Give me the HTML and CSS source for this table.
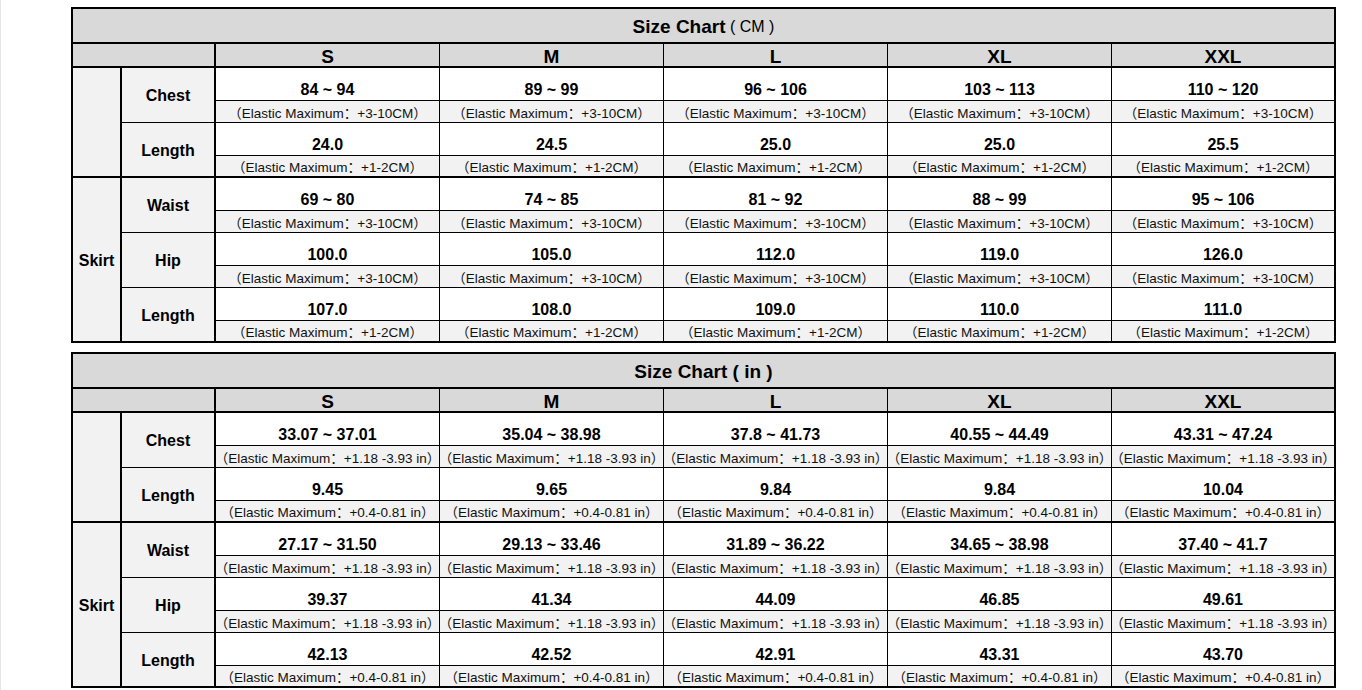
FILE: index.html
```html
<!DOCTYPE html>
<html lang="en">
<head>
<meta charset="utf-8">
<title>Size Chart</title>
<link rel="stylesheet" href="styles.css">
</head>
<body>
<main class="page">
  <section class="chart">
    <div class="title end">Size Chart<span class="unit"> ( CM )</span></div>
    <div class="head blank"></div>
    <div class="head">S</div><div class="head">M</div><div class="head">L</div><div class="head">XL</div><div class="head end">XXL</div>

    <div class="group g4"></div>
    <div class="name">Chest</div>
    <div class="val">84 ~ 94</div><div class="val">89 ~ 99</div><div class="val">96 ~ 106</div><div class="val">103 ~ 113</div><div class="val end">110 ~ 120</div>
    <div class="el">（Elastic Maximum：+3-10CM）</div><div class="el">（Elastic Maximum：+3-10CM）</div><div class="el">（Elastic Maximum：+3-10CM）</div><div class="el">（Elastic Maximum：+3-10CM）</div><div class="el end">（Elastic Maximum：+3-10CM）</div>
    <div class="name gl">Length</div>
    <div class="val">24.0</div><div class="val">24.5</div><div class="val">25.0</div><div class="val">25.0</div><div class="val end">25.5</div>
    <div class="el gl">（Elastic Maximum：+1-2CM）</div><div class="el gl">（Elastic Maximum：+1-2CM）</div><div class="el gl">（Elastic Maximum：+1-2CM）</div><div class="el gl">（Elastic Maximum：+1-2CM）</div><div class="el gl end">（Elastic Maximum：+1-2CM）</div>

    <div class="group g6 bottom">Skirt</div>
    <div class="name">Waist</div>
    <div class="val">69 ~ 80</div><div class="val">74 ~ 85</div><div class="val">81 ~ 92</div><div class="val">88 ~ 99</div><div class="val end">95 ~ 106</div>
    <div class="el">（Elastic Maximum：+3-10CM）</div><div class="el">（Elastic Maximum：+3-10CM）</div><div class="el">（Elastic Maximum：+3-10CM）</div><div class="el">（Elastic Maximum：+3-10CM）</div><div class="el end">（Elastic Maximum：+3-10CM）</div>
    <div class="name">Hip</div>
    <div class="val">100.0</div><div class="val">105.0</div><div class="val">112.0</div><div class="val">119.0</div><div class="val end">126.0</div>
    <div class="el">（Elastic Maximum：+3-10CM）</div><div class="el">（Elastic Maximum：+3-10CM）</div><div class="el">（Elastic Maximum：+3-10CM）</div><div class="el">（Elastic Maximum：+3-10CM）</div><div class="el end">（Elastic Maximum：+3-10CM）</div>
    <div class="name bottom">Length</div>
    <div class="val">107.0</div><div class="val">108.0</div><div class="val">109.0</div><div class="val">110.0</div><div class="val end">111.0</div>
    <div class="el bottom">（Elastic Maximum：+1-2CM）</div><div class="el bottom">（Elastic Maximum：+1-2CM）</div><div class="el bottom">（Elastic Maximum：+1-2CM）</div><div class="el bottom">（Elastic Maximum：+1-2CM）</div><div class="el bottom end">（Elastic Maximum：+1-2CM）</div>
  </section>

  <section class="chart">
    <div class="title end">Size Chart ( in )</div>
    <div class="head blank"></div>
    <div class="head">S</div><div class="head">M</div><div class="head">L</div><div class="head">XL</div><div class="head end">XXL</div>

    <div class="group g4"></div>
    <div class="name">Chest</div>
    <div class="val">33.07 ~ 37.01</div><div class="val">35.04 ~ 38.98</div><div class="val">37.8 ~ 41.73</div><div class="val">40.55 ~ 44.49</div><div class="val end">43.31 ~ 47.24</div>
    <div class="el">（Elastic Maximum：+1.18 -3.93 in）</div><div class="el">（Elastic Maximum：+1.18 -3.93 in）</div><div class="el">（Elastic Maximum：+1.18 -3.93 in）</div><div class="el">（Elastic Maximum：+1.18 -3.93 in）</div><div class="el end">（Elastic Maximum：+1.18 -3.93 in）</div>
    <div class="name gl">Length</div>
    <div class="val">9.45</div><div class="val">9.65</div><div class="val">9.84</div><div class="val">9.84</div><div class="val end">10.04</div>
    <div class="el gl">（Elastic Maximum：+0.4-0.81 in）</div><div class="el gl">（Elastic Maximum：+0.4-0.81 in）</div><div class="el gl">（Elastic Maximum：+0.4-0.81 in）</div><div class="el gl">（Elastic Maximum：+0.4-0.81 in）</div><div class="el gl end">（Elastic Maximum：+0.4-0.81 in）</div>

    <div class="group g6 bottom">Skirt</div>
    <div class="name">Waist</div>
    <div class="val">27.17 ~ 31.50</div><div class="val">29.13 ~ 33.46</div><div class="val">31.89 ~ 36.22</div><div class="val">34.65 ~ 38.98</div><div class="val end">37.40 ~ 41.7</div>
    <div class="el">（Elastic Maximum：+1.18 -3.93 in）</div><div class="el">（Elastic Maximum：+1.18 -3.93 in）</div><div class="el">（Elastic Maximum：+1.18 -3.93 in）</div><div class="el">（Elastic Maximum：+1.18 -3.93 in）</div><div class="el end">（Elastic Maximum：+1.18 -3.93 in）</div>
    <div class="name">Hip</div>
    <div class="val">39.37</div><div class="val">41.34</div><div class="val">44.09</div><div class="val">46.85</div><div class="val end">49.61</div>
    <div class="el">（Elastic Maximum：+1.18 -3.93 in）</div><div class="el">（Elastic Maximum：+1.18 -3.93 in）</div><div class="el">（Elastic Maximum：+1.18 -3.93 in）</div><div class="el">（Elastic Maximum：+1.18 -3.93 in）</div><div class="el end">（Elastic Maximum：+1.18 -3.93 in）</div>
    <div class="name bottom">Length</div>
    <div class="val">42.13</div><div class="val">42.52</div><div class="val">42.91</div><div class="val">43.31</div><div class="val end">43.70</div>
    <div class="el bottom">（Elastic Maximum：+0.4-0.81 in）</div><div class="el bottom">（Elastic Maximum：+0.4-0.81 in）</div><div class="el bottom">（Elastic Maximum：+0.4-0.81 in）</div><div class="el bottom">（Elastic Maximum：+0.4-0.81 in）</div><div class="el bottom end">（Elastic Maximum：+0.4-0.81 in）</div>
  </section>
</main>
</body>
</html>
```

FILE: styles.css
```css
* { box-sizing: border-box; }

html, body {
  margin: 0;
  background: #fff;
}

body {
  border-left: 1px solid #e6e6e6;
  min-height: 690px;
  font-family: "Liberation Sans", Arial, "Noto Sans CJK SC", sans-serif;
  color: #000;
}

.page {
  display: flex;
  flex-direction: column;
  gap: 9px;
  padding: 7px 0 0 70px;
}

.chart {
  display: grid;
  grid-template-columns: 49px 94px 224px 224px 224px 224px 222px;
  grid-template-rows: 35px 24px repeat(4, 33px 22px) 33px 20px;
  width: 1265px;
  border: 2px solid #000;
}

.chart > div {
  display: flex;
  align-items: center;
  justify-content: center;
  text-align: center;
  border-right: 1px solid #000;
  border-bottom: 1px solid #000;
  white-space: nowrap;
}

.title {
  grid-column: 1 / -1;
  background: #d9d9d9;
  font-weight: bold;
  font-size: 19px;
  padding-top: 2px;
  border-bottom-width: 2px !important;
}

.unit {
  font-weight: normal;
  font-size: 16px;
  white-space: pre;
}

.head {
  background: #d9d9d9;
  font-weight: bold;
  font-size: 19px;
  padding-top: 4px;
  border-bottom-width: 2px !important;
}

.head.blank {
  grid-column: span 2;
  border-right-width: 2px !important;
}

.group {
  background: #f2f2f2;
  font-weight: bold;
  font-size: 16px;
  padding-top: 2px;
  border-right-width: 2px !important;
  border-bottom-width: 2px !important;
}

.g4 { grid-row: span 4; }
.g6 { grid-row: span 6; }

.name {
  grid-row: span 2;
  background: #f2f2f2;
  font-weight: bold;
  font-size: 16px;
  padding-top: 2px;
  border-right-width: 2px !important;
}

.val {
  background: #fff;
  font-weight: bold;
  font-size: 16px;
  line-height: 18px;
  align-items: flex-end !important;
  padding-bottom: 1px;
}

.el {
  background: #f2f2f2;
  font-size: 13.5px;
  color: #111;
}

.gl { border-bottom-width: 2px !important; }

.chart > .end { border-right: 0; }
.chart > .bottom { border-bottom: 0; }
```
